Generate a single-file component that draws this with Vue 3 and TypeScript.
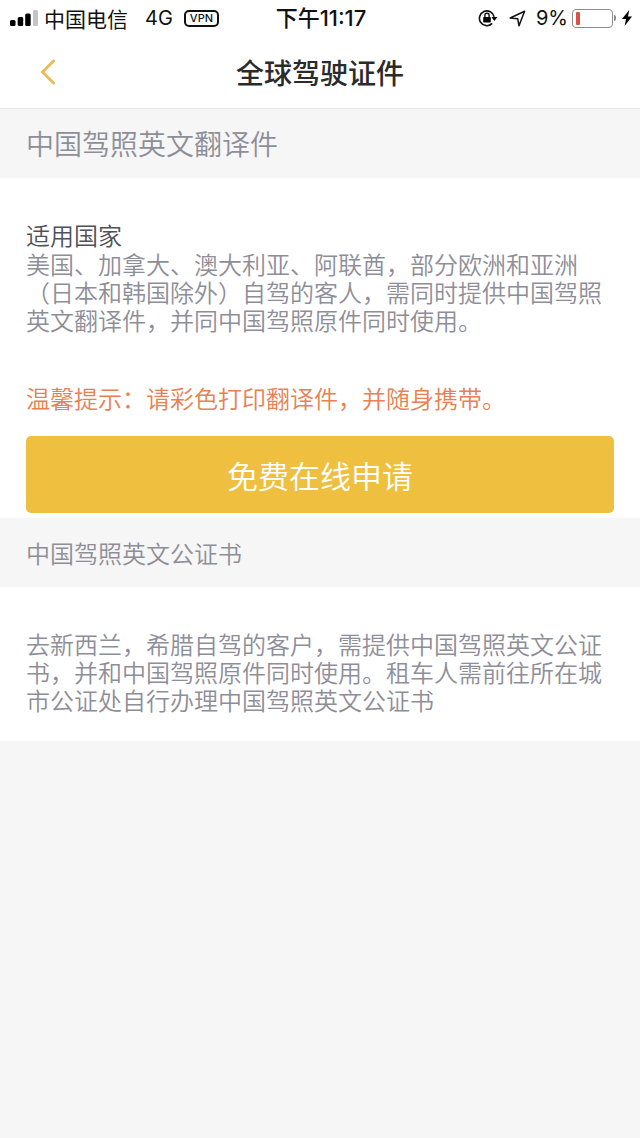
<script setup lang="ts">
interface Status {
  carrier: string
  network: string
  time: string
  battery: number
}

const status: Status = { carrier: '中国电信', network: '4G', time: '下午11:17', battery: 9 }
const batteryWidth = `${Math.round((status.battery / 100) * 36)}px`
</script>

<template>
  <div class="page">
    <div class="status">
      <div class="side">
        <svg class="signal" width="28" height="16" viewBox="0 0 28 16" aria-hidden="true">
          <rect x="0" y="10" width="5.5" height="6" rx="1.5" />
          <rect x="7.7" y="7" width="5.5" height="9" rx="1.5" />
          <rect x="15.2" y="3.5" width="5.5" height="12.5" rx="1.5" />
          <rect x="23" y="0" width="5" height="16" rx="1.5" fill="#c4c4c4" />
        </svg>
        <span class="carrier">{{ status.carrier }}</span>
        <span class="network">{{ status.network }}</span>
        <span class="vpn">VPN</span>
      </div>
      <time class="time">{{ status.time }}</time>
      <div class="side right">
        <svg class="lock" width="20" height="18" viewBox="0 0 20 18" aria-hidden="true">
          <path d="M14.2 14.4A7.4 7.4 0 1 1 16.1 7.8" fill="none" stroke="#111" stroke-width="1.6" />
          <path d="M13.4 8h6l-3 4z" />
          <rect x="5.2" y="8" width="7.6" height="5.4" rx=".7" />
          <path d="M6.9 8V6.3a2.1 2.1 0 0 1 4.2 0V8" fill="none" stroke="#111" stroke-width="1.4" />
        </svg>
        <svg class="arrow" width="17" height="17" viewBox="0 0 17 17" aria-hidden="true">
          <path d="M1.2 8 15.6 1.3 10 15.8 8.7 8.7z" fill="none" stroke="#111" stroke-width="1.5" stroke-linejoin="round" />
        </svg>
        <span class="percent">{{ status.battery }}%</span>
        <span class="battery"><span class="level" :style="{ width: batteryWidth }"></span></span>
        <span class="cap"></span>
        <svg class="bolt" width="10" height="16" viewBox="0 0 10 16" aria-hidden="true">
          <path d="M7.2 0 0 9h4L2.6 16 10 6.6H6z" />
        </svg>
      </div>
    </div>

    <header class="nav">
      <button class="back" type="button" aria-label="返回">
        <svg width="16" height="26" viewBox="0 0 16 26" aria-hidden="true">
          <path d="M13.5 2 2.5 13l11 11" fill="none" stroke="#e9bb5c" stroke-width="3" stroke-linecap="round" stroke-linejoin="round" />
        </svg>
      </button>
      <h1>全球驾驶证件</h1>
    </header>

    <main>
      <section>
        <h2 class="bar large">中国驾照英文翻译件</h2>
        <div class="panel first">
          <h3>适用国家</h3>
          <p>美国、加拿大、澳大利亚、阿联酋，部分欧洲和亚洲（日本和韩国除外）自驾的客人，需同时提供中国驾照英文翻译件，并同中国驾照原件同时使用。</p>
          <p class="tip">温馨提示：请彩色打印翻译件，并随身携带。</p>
          <button class="apply" type="button">免费在线申请</button>
        </div>
      </section>
      <section>
        <h2 class="bar">中国驾照英文公证书</h2>
        <div class="panel second">
          <p>去新西兰，希腊自驾的客户，需提供中国驾照英文公证书，并和中国驾照原件同时使用。租车人需前往所在城市公证处自行办理中国驾照英文公证书</p>
        </div>
      </section>
    </main>
  </div>
</template>

<style>
body {
  margin: 0;
  background: #f6f6f6;
}
</style>

<style scoped>
.page {
  min-height: 100vh;
  background: #f6f6f6;
  color: #8e8e98;
  font-family: "Noto Sans CJK SC", sans-serif;
}

h1,
h2,
h3,
p {
  margin: 0;
  font-weight: 350;
}

.status {
  display: flex;
  align-items: center;
  height: 36px;
  padding: 0 8px 0 10px;
  background: #fff;
  color: #111;
  font-size: 20px;
  line-height: 34px;
}

.side {
  display: flex;
  flex: 1;
  align-items: center;
}

.right {
  justify-content: flex-end;
}

.carrier {
  margin-left: 6px;
  font-size: 21px;
}

.network {
  margin-left: 17px;
  font-family: Inter, sans-serif;
}

.vpn {
  margin-left: 11px;
  padding: 0 4px;
  border: 2px solid #111;
  border-radius: 5px;
  font: 500 11px/13px Inter, sans-serif;
}

.time {
  font-family: Inter, "Noto Sans CJK SC", sans-serif;
  font-size: 22px;
  font-weight: 500;
}

.arrow {
  margin: 0 10px 0 11px;
}

.percent {
  font-family: Inter, sans-serif;
}

.battery {
  box-sizing: border-box;
  width: 41px;
  height: 19px;
  margin-left: 4px;
  padding: 2px;
  border: 1px solid #8c8c8c;
  border-radius: 4px;
}

.level {
  display: block;
  min-width: 4px;
  height: 13px;
  margin-left: 1px;
  border-radius: 1px;
  background: #dc5147;
}

.cap {
  width: 2px;
  height: 6px;
  margin: 0 6px 0 1px;
  border-radius: 0 2px 2px 0;
  background: #8c8c8c;
}

.nav {
  display: grid;
  grid-template-columns: 96px 1fr 96px;
  align-items: center;
  height: 72px;
  border-bottom: 1px solid #e6e6e6;
  background: #fff;
}

.back {
  display: flex;
  align-items: center;
  justify-content: center;
  height: 72px;
  padding: 0;
  border: 0;
  background: none;
}

.nav h1 {
  color: #2b2b2b;
  font-size: 28px;
  font-weight: 500;
  line-height: 70px;
  text-align: center;
}

.bar {
  padding: 0 26px;
  font-size: 24px;
  line-height: 69px;
}

.bar.large {
  font-size: 28px;
}

.panel {
  background: #fff;
  font-size: 24px;
  line-height: 28px;
}

.first {
  padding: 42px 26px 5px;
}

.second {
  padding: 43px 26px 27px;
}

h3 {
  color: #50505a;
  font-size: 24px;
  line-height: 30px;
}

.tip {
  margin: 50px 0 24px;
  color: #e98052;
}

.apply {
  display: block;
  width: 100%;
  height: 77px;
  padding: 0;
  border: 0;
  border-radius: 5px;
  background: #efc040;
  color: #fff;
  font-family: inherit;
  font-size: 31px;
  font-weight: 350;
}
</style>
